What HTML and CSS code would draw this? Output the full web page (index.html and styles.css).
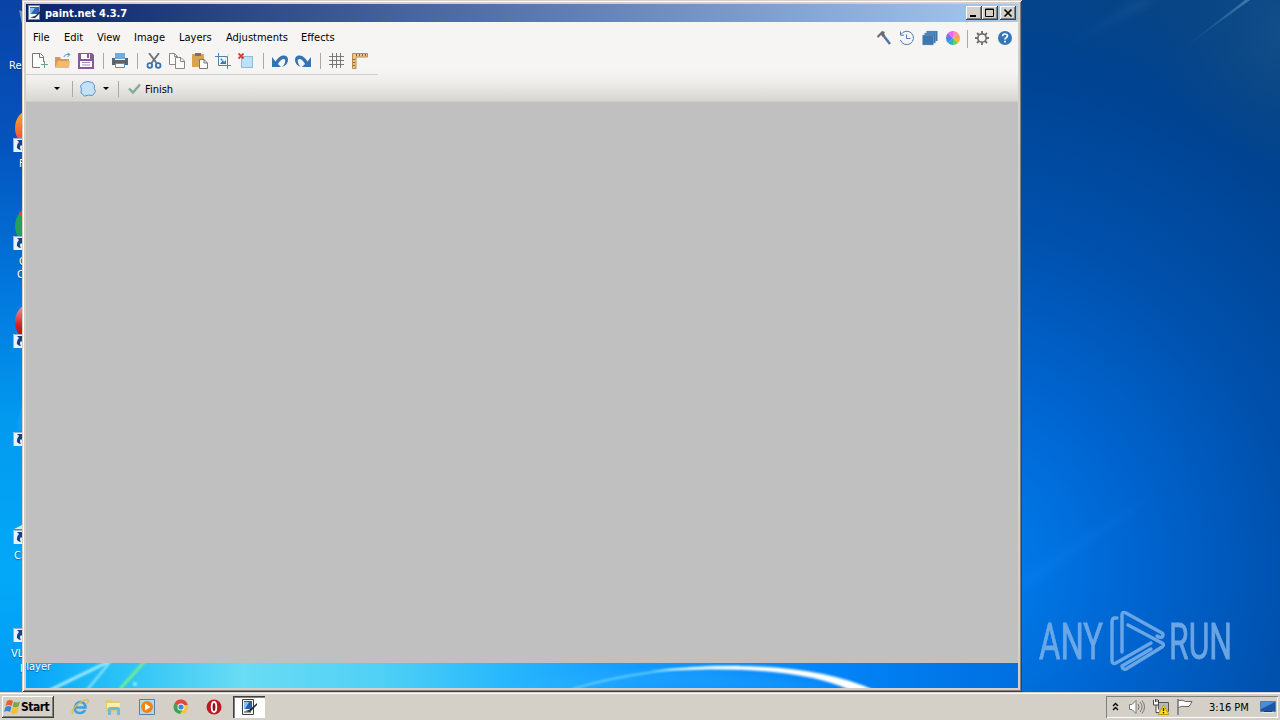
FILE: index.html
```
<!DOCTYPE html>
<html>

<head>
    <title>paint.net 4.3.7</title>
    <meta charset="utf-8" />
    <link rel="stylesheet" href="styles.css">
</head>

<body>
    <div class="desktop">
        <!-- wallpaper -->
        <svg class="wallpaper" width="1280" height="720" viewBox="0 0 1280 720">
            <defs>
                <linearGradient id="leftSky" x1="0" y1="0" x2="0" y2="1">
                    <stop offset="0" stop-color="#0a43a6" />
                    <stop offset=".2" stop-color="#0454be" />
                    <stop offset=".4" stop-color="#0277dd" />
                    <stop offset=".58" stop-color="#0299ef" />
                    <stop offset=".8" stop-color="#03a9f8" />
                    <stop offset="1" stop-color="#0298f4" />
                </linearGradient>
                <linearGradient id="strip" x1="0" y1="0" x2="1" y2="0">
                    <stop offset="0" stop-color="#04a4fa" />
                    <stop offset=".1" stop-color="#2bc3f6" />
                    <stop offset=".22" stop-color="#6adcf4" />
                    <stop offset=".36" stop-color="#4fd0f5" />
                    <stop offset=".48" stop-color="#28b8fc" />
                    <stop offset=".62" stop-color="#1299ff" />
                    <stop offset=".82" stop-color="#0283f7" />
                    <stop offset="1" stop-color="#006fdf" />
                </linearGradient>
                <radialGradient id="rightSky" gradientUnits="userSpaceOnUse" cx="0" cy="0" r="600" gradientTransform="translate(940 570)">
                    <stop offset="0" stop-color="#007cf0" />
                    <stop offset=".14" stop-color="#0077e6" />
                    <stop offset=".34" stop-color="#0064cf" />
                    <stop offset=".58" stop-color="#0051ad" />
                    <stop offset=".85" stop-color="#004392" />
                    <stop offset="1" stop-color="#064486" />
                </radialGradient>
                <radialGradient id="corner" gradientUnits="userSpaceOnUse" cx="1290" cy="30" r="140">
                    <stop offset="0" stop-color="#1a5488" stop-opacity=".7" />
                    <stop offset="1" stop-color="#0a4684" stop-opacity="0" />
                </radialGradient>
                <linearGradient id="ray" x1="0" y1="1" x2="1" y2="0">
                    <stop offset="0" stop-color="#4aa0e8" stop-opacity="0" />
                    <stop offset="1" stop-color="#7fb2da" stop-opacity=".45" />
                </linearGradient>
                <filter id="soft"><feGaussianBlur stdDeviation=".8" /></filter>
                <filter id="haze"><feGaussianBlur stdDeviation="4" /></filter>
            </defs>
            <rect width="24" height="720" fill="url(#leftSky)" />
            <rect x="1020" width="260" height="720" fill="url(#rightSky)" />
            <rect x="1100" width="180" height="200" fill="url(#corner)" />
            <path d="M1181 50 1245 0h5Z" fill="url(#ray)" />
            <path d="M1050 55 1135 0h25Z" fill="url(#ray)" opacity=".25" filter="url(#haze)" />
            <path d="M1020 575 1160 490 1022 594Z" fill="#1d92ff" opacity=".14" filter="url(#haze)" />
            <rect x="24" y="655" width="996" height="36" fill="url(#strip)" />
            <path d="M500 690Q650 650 850 690Z" fill="#35b6ff" opacity=".25" filter="url(#haze)" />
            <g fill="none" filter="url(#soft)">
                <path d="M50 690 110 661" stroke="#a5ecff" stroke-width="3" />
                <path d="M87 690 111 661" stroke="#8be6ff" stroke-width="2" />
                <path d="M120 689 146 660" stroke="#75ed91" stroke-width="3" />
                <path d="M572 689Q650 666 740 667" stroke="#71d8ff" stroke-width="1.6" />
            </g>
            <path d="M650 671Q798 655 876 691L850 690Q790 663 650 671Z" fill="#fff" filter="url(#soft)" />
            <circle cx="135" cy="684" r="2" fill="#96efff" filter="url(#soft)" />
        </svg>

        <!-- desktop shortcuts -->
        <svg class="shortcuts" width="24" height="680" viewBox="0 0 24 680">
            <defs>
                <symbol id="arrow" viewBox="0 0 14 14">
                    <path d="M0 0h14v14H0Z" fill="#e8f2fb" />
                    <path d="M.5 14V.5H14" fill="none" stroke="#9ab0c4" />
                    <path d="M4 2h6v7L8 7q-2 2 0 5-5-1-4-4 0-2 2-4Z" fill="#173e8c" />
                </symbol>
                <linearGradient id="fox" x1="0" y1="0" x2="0" y2="1">
                    <stop offset="0" stop-color="#ffaf24" />
                    <stop offset="1" stop-color="#f23d34" />
                </linearGradient>
                <linearGradient id="opera" x1="0" y1="0" x2="0" y2="1">
                    <stop offset="0" stop-color="#f3a3a9" />
                    <stop offset=".6" stop-color="#cf1f28" />
                    <stop offset="1" stop-color="#b40710" />
                </linearGradient>
            </defs>
            <path d="M19 10l5 2v22Z" fill="#9fc4e4" opacity=".6" />
            <ellipse cx="30" cy="128" rx="15" ry="18" fill="url(#fox)" />
            <ellipse cx="30" cy="226" rx="15" ry="18" fill="#24a05a" />
            <path d="M19 213 24 208v13Z" fill="#dc4b36" />
            <ellipse cx="30" cy="322" rx="15" ry="18" fill="url(#opera)" />
            <path d="M24 402q-7 12-7 28h7Z" fill="#1e9cf2" opacity=".6" />
            <path d="M14 529l10-5v5Z" fill="#dce5e9" />
            <use href="#arrow" x="13" y="138" width="14" height="14" />
            <use href="#arrow" x="13" y="236" width="14" height="14" />
            <use href="#arrow" x="13" y="334" width="14" height="14" />
            <use href="#arrow" x="13" y="432" width="14" height="14" />
            <use href="#arrow" x="13" y="530" width="14" height="14" />
            <use href="#arrow" x="13" y="628" width="14" height="14" />
        </svg>
        <span class="label lb-recycle">Re</span>
        <span class="label lb-firefox">F</span>
        <span class="label lb-google">G</span>
        <span class="label lb-chrome">C</span>
        <span class="label lb-cleaner">C</span>
        <span class="label lb-vlc">VL</span>
        <span class="label lb-player">player</span>

        <!-- watermark -->
        <svg class="watermark" width="220" height="80" viewBox="1030 600 220 80">
            <g class="brand">
                <text x="1039" y="659" textLength="64" lengthAdjust="spacingAndGlyphs">ANY</text>
                <text x="1169" y="659" textLength="63" lengthAdjust="spacingAndGlyphs">RUN</text>
            </g>
            <g fill="none" stroke="#7db2ea" stroke-width="3.4" stroke-linejoin="round" stroke-linecap="round">
                <path d="M1117 618h-2q-3 0-3 4v38q0 5 4 3l35-20" />
                <path d="M1122 652v-37q0-4 4-2l36 20q2 2 0 4-2 1-5-1" />
                <path d="M1128 625 1162 643q3 2 0 4l-36 22q-4 1-4-3l29-17" />
            </g>
        </svg>

        <!-- paint.net window -->
        <div class="window">
            <div class="titlebar">
                <svg width="16" height="16" viewBox="0 0 16 16">
                    <path d="M1.500.5h11v14h-11Z" fill="#f4f4f4" stroke="#7b8796" />
                    <path d="M3 2h9v7H3Z" fill="#2a63b7" />
                    <path d="M3 3h5L4 9H3Z" fill="#8ec1e8" />
                    <path d="M14.500 5 8 11l-5 1.500 5 .5 7-7Z" fill="#202a3c" />
                </svg>
                <span class="caption">paint.net 4.3.7</span>
                <div class="winbtns">
                    <div class="winbtn"><svg width="12" height="10"><path d="M2 7h6v2H2Z" /></svg></div>
                    <div class="winbtn"><svg width="12" height="10"><path d="M1.500 1h8v7.500h-8ZM1 1.500h9" fill="none" stroke="#000" /></svg></div>
                    <div class="winbtn close"><svg width="12" height="10"><path d="M2.500 1.500l7 7m0-7-7 7" stroke="#000" stroke-width="1.600" /></svg></div>
                </div>
            </div>

            <div class="chrome">
                <div class="top">
                    <div class="menu">
                        <span class="m-file">File</span>
                        <span class="m-edit">Edit</span>
                        <span class="m-view">View</span>
                        <span class="m-image">Image</span>
                        <span class="m-layers">Layers</span>
                        <span class="m-adjust">Adjustments</span>
                        <span class="m-effects">Effects</span>
                    </div>
                    <div class="utils">
                        <svg width="16" height="16" viewBox="0 0 16 16">
                            <path d="M7 5l7 9" stroke="#5276a8" stroke-width="2.600" />
                            <path d="M1 6 6 1l3 1-1 2 1 1-2 2-2-2-3 3Z" fill="#6b6b6b" />
                        </svg>
                        <svg width="16" height="16" viewBox="0 0 16 16" fill="none" stroke="#4c7cae">
                            <path d="M2 4.500A6.700 6.700 0 1 1 1.400 10" />
                            <path d="M1.500 1.500v3.700h3.700M7.500 4.500v4h4" />
                        </svg>
                        <svg width="16" height="16" viewBox="0 0 16 16" fill="#3f76ae" stroke="#8db8e0" stroke-width=".4">
                            <path d="M4.500 1h11v10h-11Z" />
                            <path d="M2.500 3h11v10h-11Z" />
                            <path d="M.5 5h11v10H.5Z" />
                        </svg>
                        <svg width="16" height="16" viewBox="0 0 16 16">
                            <path d="M8 8V1a7 7 0 0 1 5 2Z" fill="#f78db1" />
                            <path d="M8 8l5-5a7 7 0 0 1 2 5Z" fill="#ff9a7b" />
                            <path d="M8 8h7a7 7 0 0 1-2 5Z" fill="#f3b33f" />
                            <path d="M8 8l5 5a7 7 0 0 1-5 2Z" fill="#74c95b" />
                            <path d="M8 8v7a7 7 0 0 1-5-2Z" fill="#24b9ae" />
                            <path d="M8 8l-5 5a7 7 0 0 1-2-5Z" fill="#4089f1" />
                            <path d="M8 8H1a7 7 0 0 1 2-5Z" fill="#9860ed" />
                            <path d="M8 8 3 3a7 7 0 0 1 5-2Z" fill="#ef67e5" />
                        </svg>
                        <i class="sep tall"></i>
                        <svg width="16" height="16" viewBox="0 0 16 16" fill="none" stroke="#707070">
                            <circle cx="8" cy="8" r="4.200" stroke-width="1.700" />
                            <path d="M8 1v3M8 12v3M1 8h3M12 8h3M3 3l2 2M11 11l2 2M13 3l-2 2M5 11l-2 2" stroke-width="1.900" />
                        </svg>
                        <svg width="16" height="16" viewBox="0 0 16 16">
                            <circle cx="8" cy="8" r="7" fill="#3475b7" />
                            <path d="M5.600 6.200Q5.600 4 8 4t2.400 2q0 1-1.200 1.700T8 9.500M8 10.800v1.800" fill="none" stroke="#fff" stroke-width="1.700" />
                        </svg>
                    </div>
                </div>

                <div class="tools">
                    <svg width="16" height="16" viewBox="0 0 16 16">
                        <path d="M8 14.500H.5V.5h8l3 3V9M7.500.5v4h4" fill="#fff" stroke="#777" />
                        <path d="M12.500 8v7M9 11.500h7" stroke="#69a383" />
                    </svg>
                    <svg width="16" height="16" viewBox="0 0 16 16">
                        <path d="M0 15V4h5l1 2h8v3H4Z" fill="#d79b4c" />
                        <path d="M3 8h12l-1 7H0Z" fill="#f2bb6a" />
                        <path d="M9 4q0-2.500 5-2.500M12.500 0 15 1.500 12.500 4" fill="none" stroke="#4d93c4" />
                    </svg>
                    <svg width="16" height="16" viewBox="0 0 16 16">
                        <path d="M0 0h14l2 2v14H0Z" fill="#86599f" />
                        <path d="M3 1h9v5H3ZM2 8h12v6H2Z" fill="#fff" />
                        <path d="M9 1h2v4H9Z" fill="#86599f" />
                        <path d="M4 9.500h8M4 12h8" stroke="#a88bb8" />
                    </svg>
                    <i class="sep"></i>
                    <svg width="16" height="16" viewBox="0 0 16 16">
                        <path d="M3 0h10v6H3Z" fill="#6caddd" />
                        <path d="M0 5h3v2h10V5h3v7H0Z" fill="#5a6470" />
                        <path d="M3.500 10.500h9v4h-9Z" fill="#fff" stroke="#4c94c8" />
                    </svg>
                    <i class="sep"></i>
                    <svg width="16" height="16" viewBox="0 0 16 16" fill="none">
                        <path d="M3 0 10.500 10M13 0 5.500 10" stroke="#68727b" stroke-width="1.800" />
                        <circle cx="3.800" cy="12.500" r="2.300" stroke="#3475b7" stroke-width="1.800" />
                        <circle cx="12.200" cy="12.500" r="2.300" stroke="#3475b7" stroke-width="1.800" />
                    </svg>
                    <svg width="16" height="16" viewBox="0 0 16 16" fill="#fbfaf8" stroke="#888">
                        <path d="M.5.5h5l3 3v8h-8ZM5.500.5v3h3" />
                        <path d="M6.500 4.500h5.500l3.500 3.500v7.500h-9ZM11.500 4.500v4h4" />
                    </svg>
                    <svg width="16" height="16" viewBox="0 0 16 16">
                        <path d="M0 1h12v13H0Z" fill="#dba351" />
                        <path d="M3 0h6v3H3Z" fill="#74736f" />
                        <path d="M7.500 6.500H12l3.500 3.500v5.500h-8ZM12 6.500V10h3.500" fill="#fff" stroke="#777" />
                    </svg>
                    <svg width="16" height="16" viewBox="0 0 16 16" fill="none">
                        <path d="M3.500 0v12.500H16M0 3.500h12.500V16" stroke="#4e81b4" />
                        <path d="M5 11l3-4 1 2 2-2v4Z" fill="#327bb8" />
                        <path d="M14 1 10 6" stroke="#9bbbd8" stroke-dasharray="1 1" />
                        <circle cx="6.500" cy="6.500" r="1" fill="#327bb8" />
                    </svg>
                    <svg width="16" height="16" viewBox="0 0 16 16">
                        <path d="M3.500 3.500h11v11h-11Z" fill="#bce2fa" stroke="#4c89b9" stroke-dasharray="1 1" />
                        <path d="M.5.5l5 5M5.500.5l-5 5" stroke="#d43b3b" stroke-width="1.900" />
                    </svg>
                    <i class="sep"></i>
                    <svg width="16" height="16" viewBox="0 0 16 16">
                        <path d="M0 4v10h9L6 11Q9 6 11.500 6T13 9.500 10 14q6-2 6-7t-5-4.500Q7 3 3.500 8.500Z" fill="#3475b0" />
                    </svg>
                    <svg width="16" height="16" viewBox="0 0 16 16">
                        <path d="M16 4v10H7l3-3Q7 6 4.500 6T3 9.500 6 14Q0 12 0 7t5-4.500Q9 3 12.500 8.500Z" fill="#3475b0" />
                    </svg>
                    <i class="sep"></i>
                    <svg width="16" height="16" viewBox="0 0 16 16" stroke="#777">
                        <path d="M3.500 0v15M7.500 0v15M11.500 0v15M0 3.500h15M0 7.500h15M0 11.500h15" />
                    </svg>
                    <svg width="16" height="16" viewBox="0 0 16 16">
                        <path d="M.5.5h15V4H4v11.500H.5Z" fill="#edc785" stroke="#b88c50" />
                        <path d="M4.500 1v2M7.500 1v2M10.500 1v2M13.500 1v2M1 6.500h2M1 9.500h2M1 12.500h2" stroke="#806441" />
                    </svg>
                </div>

                <div class="options">
                    <i class="caret"></i>
                    <i class="sep"></i>
                    <svg width="16" height="16" viewBox="0 0 16 16">
                        <path d="M3.500 1.500Q8-.5 12.500 1.500l2 3q-1 3 1 6l-3 4q-4-1-8 .500l-3.500-3q1-4-.500-7Z" fill="#c3e1f8" stroke="#5b92c4" />
                    </svg>
                    <i class="caret second"></i>
                    <i class="sep"></i>
                    <svg class="check" width="14" height="12" viewBox="0 0 14 12"><path d="M1 5.500l4 4 7-8" fill="none" stroke="#7dae95" stroke-width="2.400" /></svg>
                    <span class="finish">Finish</span>
                </div>
            </div>
            <div class="canvas"></div>
        </div>

        <!-- taskbar -->
        <div class="taskbar">
            <div class="start">
                <svg width="17" height="16" viewBox="0 0 17 16">
                    <path d="M3 2q3-2 6 0L7.500 7q-3-2-6 0Z" fill="#e7602d" />
                    <path d="M10 2.500q3 2 6 0l-1.500 5q-3 2-6 0Z" fill="#76ac37" />
                    <path d="M1.500 8q3-2 6 0L6 13q-3-2-6 0Z" fill="#3986cf" />
                    <path d="M8.500 8.500q3 2 6 0L13 14q-3 2-6 0Z" fill="#f5bd29" />
                </svg>
                <span>Start</span>
            </div>
            <div class="quick">
                <svg width="18" height="18" viewBox="0 0 18 18" fill="none">
                    <path d="M4 9.500h10.500Q14 4 9.500 4T4 9.500t5 5.500q3.500 0 5-3" stroke="#3ba2de" stroke-width="2.600" />
                    <path d="M2 16q-3-3 4-9t11-5q1 1-1 4" stroke="#e6b94a" stroke-width="1.300" />
                </svg>
                <svg width="18" height="18" viewBox="0 0 18 18">
                    <path d="M1 2h6l1 1h7v11H1Z" fill="#e3cb70" />
                    <path d="M2 5h13v5H2Z" fill="#fbeea6" />
                    <path d="M3 17v-6q0-2 2-2h8q2 0 2 2v6h-3v-5H6v5Z" fill="#70b9da" />
                </svg>
                <svg width="18" height="18" viewBox="0 0 18 18">
                    <path d="M1.500 1.500h15v15h-15Z" fill="#b4d8ef" stroke="#4c83b4" />
                    <circle cx="9" cy="9" r="6" fill="#ee8519" />
                    <path d="M7 5.500 12.500 9 7 12.500Z" fill="#fff" />
                </svg>
                <svg width="18" height="18" viewBox="0 0 18 18">
                    <circle cx="9" cy="9" r="7" fill="#f4c632" />
                    <path d="M9 9 2.500 5.500A7 7 0 0 1 15.700 7H9Z" fill="#dd4b3c" />
                    <path d="M9 9 2.500 5.500A7 7 0 0 0 8 16l3-5Z" fill="#3aa457" />
                    <circle cx="9" cy="9" r="3.500" fill="#fff" />
                    <circle cx="9" cy="9" r="2.600" fill="#3e83dc" />
                </svg>
                <svg width="18" height="18" viewBox="0 0 18 18">
                    <circle cx="9" cy="9" r="7.500" fill="#bd1923" />
                    <ellipse cx="9" cy="9" rx="2.300" ry="5" fill="#8c0e17" stroke="#fff" stroke-width="1.800" />
                </svg>
            </div>
            <div class="task">
                <svg width="16" height="16" viewBox="0 0 16 16">
                    <path d="M1.500.5h11v15h-11Z" fill="#f6f6f6" stroke="#35404f" />
                    <path d="M3 2h8v8H3Z" fill="#275eb2" />
                    <path d="M3 3h5L4 10H3Z" fill="#92c3e7" />
                    <path d="M3 13h7" stroke="#35404f" />
                    <path d="M16 4 8 11l-4 1 5 1 7-7Z" fill="#222b3b" />
                </svg>
            </div>
            <div class="tray">
                <svg class="chev" width="7" height="10" viewBox="0 0 7 10"><path d="M1 4l2.500-2.500L6 4M1 8l2.500-2.500L6 8" fill="none" stroke="#000" stroke-width="1.300" /></svg>
                <svg width="17" height="16" viewBox="0 0 17 16" fill="none" stroke="#777">
                    <path d="M.5 5.500H3l4-4v13l-4-4H.5Z" fill="#fff" />
                    <path d="M9 5q2 3 0 6M11 3q4 5 0 10M13 1.500q5 6.500 0 13" />
                </svg>
                <svg class="net" width="17" height="16" viewBox="0 0 17 16">
                    <path d="M5.500 3.500h10v9h-10Z" fill="#b5b9b5" stroke="#555" />
                    <path d="M.5 1v5h5V1M2.500 0v3M4 0v3M3 6v7.500h4" fill="#fff" stroke="#444" />
                    <path d="M10.500 6 16 15.500H5Z" fill="#fbdc22" stroke="#c39b16" />
                    <path d="M10.500 9v3M10.500 13v1.500" stroke="#222" stroke-width="1.300" />
                </svg>
                <svg class="flag" width="17" height="16" viewBox="0 0 17 16">
                    <path d="M1.500 1.500q4-1 7 1h6.500q-1 2-3 5H8q-3-1-6.500 1" fill="#fff" stroke="#666" />
                    <path d="M1 0v16" stroke="#666" stroke-width="1.300" />
                </svg>
                <span class="clock">3:16 PM</span>
                <svg width="16" height="13" viewBox="0 0 16 13">
                    <path d="M.5.5h15v10H.5Z" fill="#1d55aa" stroke="#557caf" />
                    <path d="M1 1h14L1 8Z" fill="#4a8cd9" />
                    <path d="M2 11.500h12" stroke="#dfe7ef" />
                    <path d="M4 10.500h8" stroke="#173d73" />
                </svg>
            </div>
        </div>
    </div>
</body>

</html>
```
FILE: styles.css
```
body {
    margin: 0;
    overflow: hidden;
    font-family: "DejaVu Sans Condensed", "DejaVu Sans", "Liberation Sans", sans-serif;
    font-size: 11px;
    color: #000;
}

svg {
    display: block;
    flex: none;
}

.desktop {
    position: relative;
    display: flex;
    flex-direction: column;
    justify-content: flex-end;
    width: 1280px;
    height: 720px;
    overflow: hidden;
    background: #0072de;
}

.wallpaper,
.shortcuts {
    position: absolute;
    top: 0;
    left: 0;
}

/* 桌面图标文字 */
.label {
    position: absolute;
    color: #fff;
    line-height: 14px;
    text-shadow: 0 1px 1px rgba(0, 30, 80, .5);
}

.lb-recycle { left: 9px; top: 59px; }
.lb-firefox { left: 19px; top: 157px; }
.lb-google { left: 19px; top: 255px; }
.lb-chrome { left: 17px; top: 268px; }
.lb-cleaner { left: 14px; top: 549px; }
.lb-vlc { left: 11px; top: 647px; }
.lb-player { left: 20px; top: 660px; }

.watermark {
    position: absolute;
    left: 1030px;
    top: 600px;
    opacity: .85;
}

.brand {
    font: 400 50px "Roboto", sans-serif;
    fill: #7db2ea;
    stroke: #7db2ea;
    stroke-width: .8px;
}

/* 窗口 */
.window {
    position: absolute;
    left: 22px;
    top: 0;
    box-sizing: border-box;
    width: 1000px;
    height: 692px;
    padding: 4px;
    box-shadow: inset 1px 1px #d4d0c8, inset -1px -1px #404040, inset 2px 2px #fff, inset -2px -2px #808080, inset 4px 4px #d4d0c8, inset -4px -4px #d4d0c8;
}

.titlebar {
    display: flex;
    align-items: center;
    height: 18px;
    padding: 0 2px 0 1px;
    background: linear-gradient(90deg, #0a246a, #a6caf0);
}

.caption {
    margin-left: 2px;
    color: #fff;
    font-weight: bold;
    letter-spacing: -.05px;
}

.winbtns {
    display: flex;
    margin-left: auto;
}

.winbtn {
    display: flex;
    align-items: center;
    justify-content: center;
    width: 16px;
    height: 14px;
    background: #d4d0c8;
    box-shadow: inset -1px -1px #404040, inset 1px 1px #fff, inset -2px -2px #808080;
}

.close {
    margin-left: 2px;
}

.chrome {
    height: 80px;
    background: linear-gradient(#f7f5f3 0, #f7f5f3 48px, #efedea 60px, #d8d6d1 79px, #c6c4c0 80px);
}

.top {
    display: flex;
    justify-content: space-between;
    height: 30px;
}

.menu {
    display: flex;
    padding-left: 7px;
    line-height: 32px;
    white-space: nowrap;
}

.m-file { width: 31px; }
.m-edit { width: 33px; }
.m-view { width: 37px; }
.m-image { width: 45px; }
.m-layers { width: 47px; }
.m-adjust { width: 75px; }

.utils {
    display: flex;
    gap: 7px;
    padding: 8px 5px 0 0;
}

.sep {
    flex: none;
    width: 1px;
    height: 16px;
    margin: 0 1px 0 2px;
    background: #aaa9a7;
}

.utils .tall {
    height: 18px;
    margin: 0 -1px 0 -1px;
}

.tools {
    display: flex;
    gap: 7px;
    box-sizing: border-box;
    width: 352px;
    height: 23px;
    padding: 1px 0 0 6px;
    border-bottom: 1px solid #d2d0cc;
}

.options {
    display: flex;
    align-items: center;
    height: 27px;
    padding-left: 28px;
}

.options .sep {
    margin: 0 7px 0 12px;
}

.options .second + .sep {
    margin: 0 9px;
}

.caret {
    border: 3px solid transparent;
    border-top-color: #000;
    border-bottom: 0;
}

.second {
    margin-left: 7px;
}

.check {
    margin-right: 3px;
}

.finish {
    padding-top: 1px;
}

.canvas {
    height: 561px;
    background: #c0c0c0;
}

/* 任务栏 */
.taskbar {
    position: relative;
    display: flex;
    box-sizing: border-box;
    height: 28px;
    padding: 4px 2px 2px;
    background: #d4d0c8;
    box-shadow: inset 0 1px #d4d0c8, inset 0 2px #fff;
}

.start {
    display: flex;
    align-items: center;
    box-sizing: border-box;
    width: 52px;
    height: 22px;
    padding-left: 2px;
    font-size: 12px;
    font-weight: bold;
    letter-spacing: -.5px;
    box-shadow: inset -1px -1px #404040, inset 1px 1px #fff, inset -2px -2px #808080;
}

.quick {
    display: flex;
    gap: 15.6px;
    padding: 2px 0 0 17px;
}

.task {
    display: flex;
    align-items: center;
    justify-content: center;
    width: 32px;
    height: 22px;
    margin-left: 10px;
    background: #fff;
    box-shadow: inset 1px 1px #404040, inset 2px 2px #808080, inset -1px -1px #fff;
}

.tray {
    display: flex;
    align-items: center;
    box-sizing: border-box;
    width: 172px;
    height: 22px;
    margin-left: auto;
    padding-left: 6px;
    box-shadow: inset 1px 1px #808080, inset -1px -1px #fff;
}

.chev {
    margin-right: 10px;
}

.net {
    margin-left: 7px;
}

.flag {
    margin-left: 7px;
}

.clock {
    width: 51px;
    margin-left: 15px;
    white-space: nowrap;
}
```
